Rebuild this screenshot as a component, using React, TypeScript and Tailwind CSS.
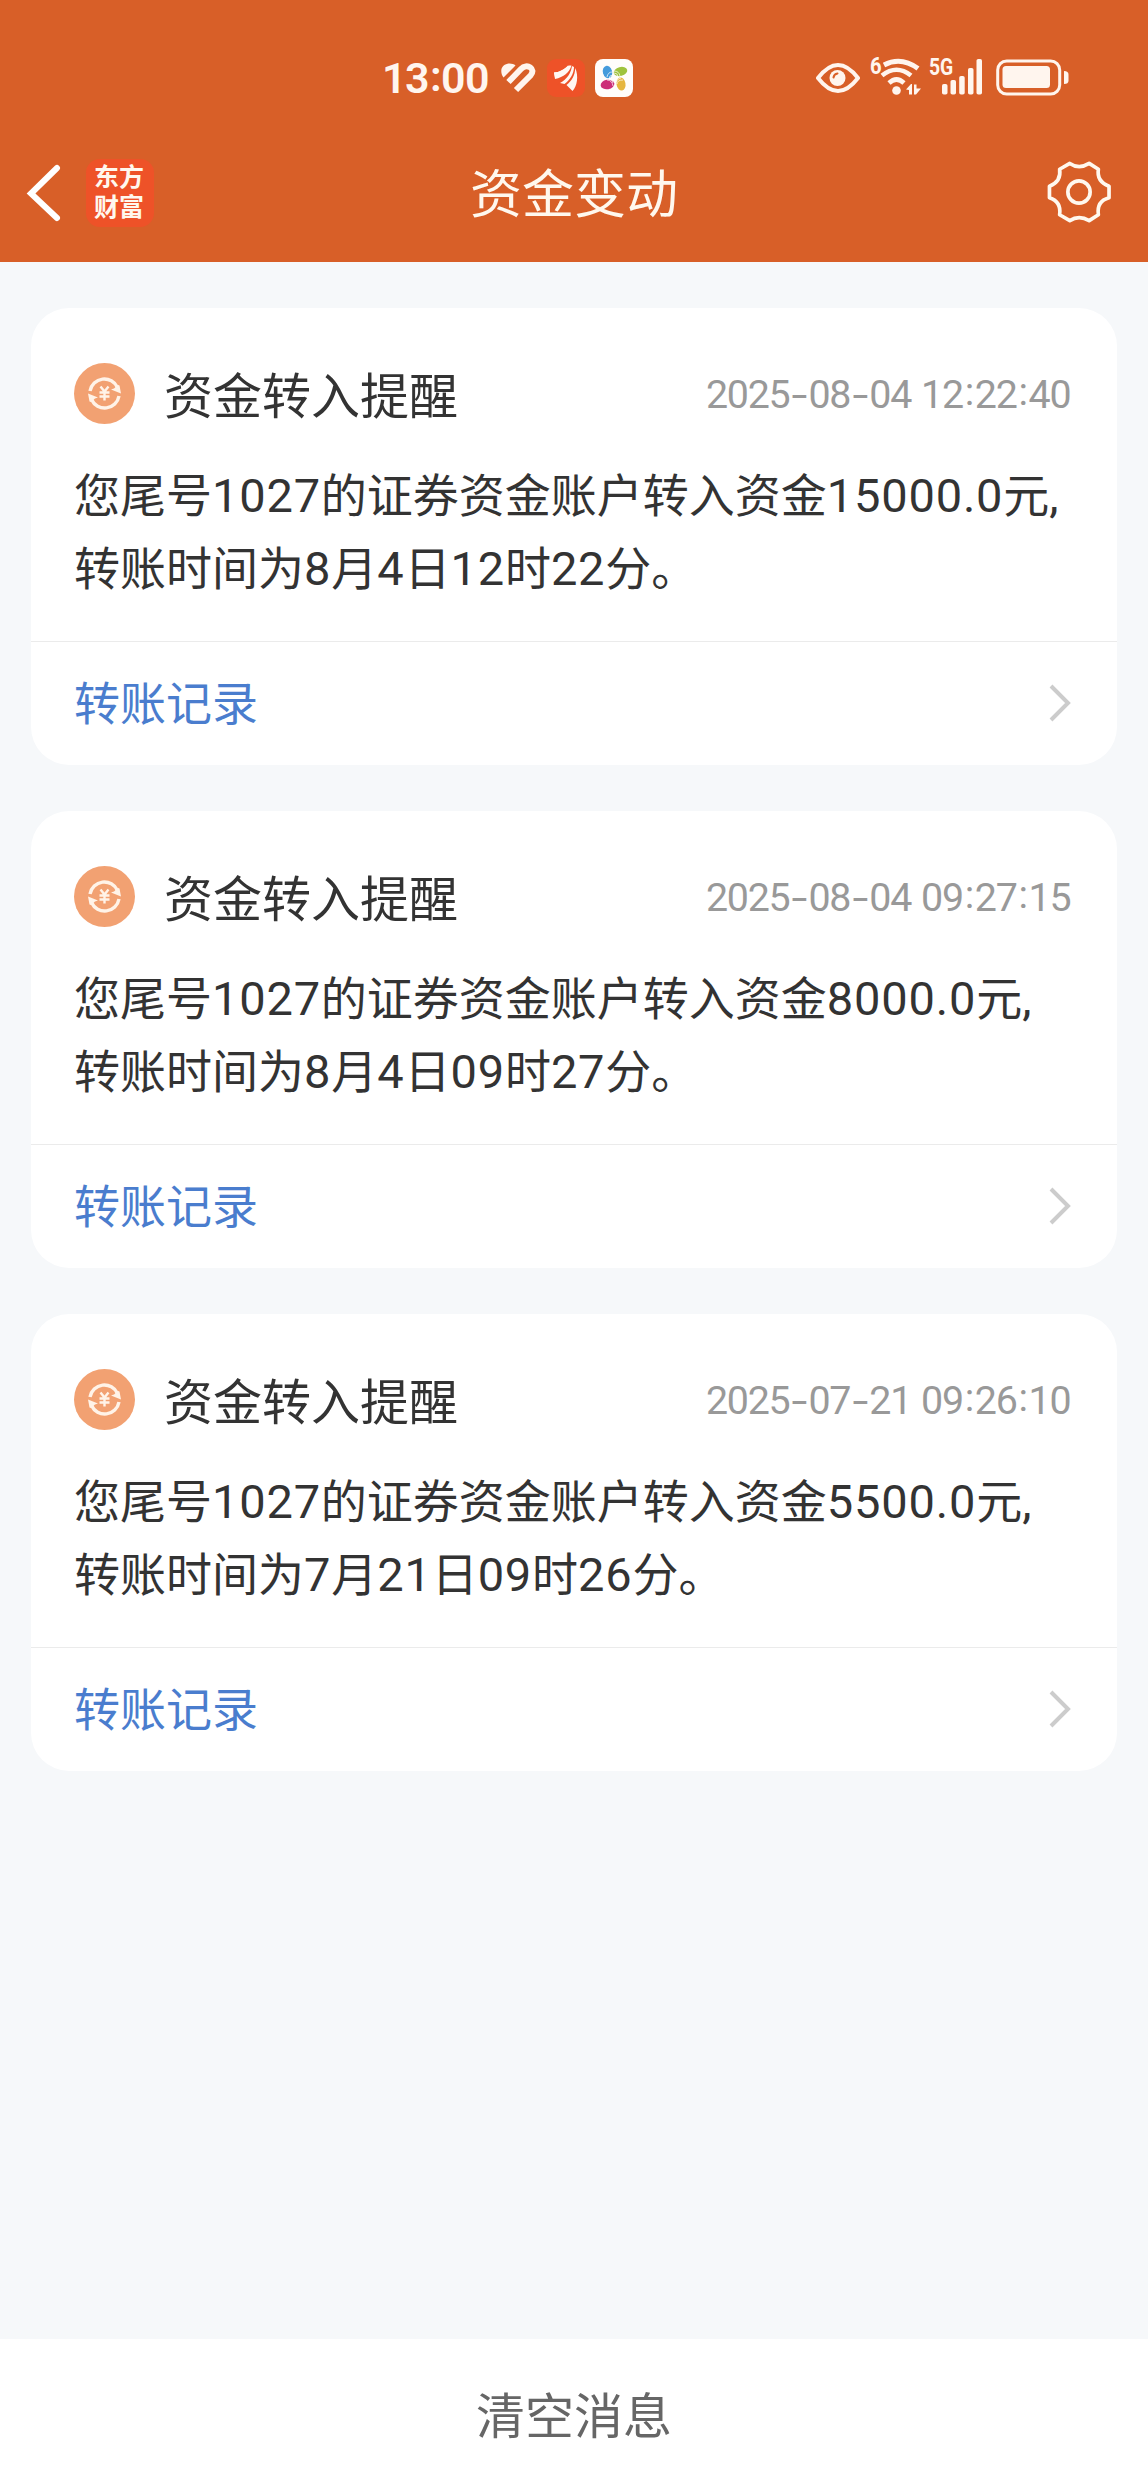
import React from 'react';

const messages = [
  {
    time: '2025-08-04 12:22:40',
    lines: ['您尾号1027的证券资金账户转入资金15000.0元,', '转账时间为8月4日12时22分。'],
  },
  {
    time: '2025-08-04 09:27:15',
    lines: ['您尾号1027的证券资金账户转入资金8000.0元,', '转账时间为8月4日09时27分。'],
  },
  {
    time: '2025-07-21 09:26:10',
    lines: ['您尾号1027的证券资金账户转入资金5500.0元,', '转账时间为7月21日09时26分。'],
  },
];

/* Latin runs get the narrower numeral face, Chinese runs keep the CJK face. */
function MixedText({ text }: { text: string }) {
  const runs = text.match(/[0-9.,]+|[^0-9.,]+/g) ?? [];
  return (
    <>
      {runs.map((run, i) =>
        /^[0-9.,]/.test(run) ? (
          <span key={i} className="font-[Roboto] text-[47px] leading-none tracking-[0.8px]">
            {run}
          </span>
        ) : (
          <span key={i}>{run}</span>
        ),
      )}
    </>
  );
}

function Timestamp({ value }: { value: string }) {
  return (
    <time className="flex items-center font-[Roboto] text-[39.4px] leading-[48px] text-[#999999]">
      {value.split('').map((c, i) => {
        if (c === '-')
          return (
            <span key={i} className="flex w-[19px] justify-center">
              <span className="scale-x-[1.45]">-</span>
            </span>
          );
        if (c === ':')
          return (
            <span key={i} className="flex w-[12px] -translate-y-[3px] justify-center">
              :
            </span>
          );
        if (c === ' ')
          return (
            <span key={i} className="w-[10px] whitespace-pre">
              {' '}
            </span>
          );
        return (
          <span key={i} className="flex w-[20.9px] justify-center">
            {c}
          </span>
        );
      })}
    </time>
  );
}

function CoinIcon() {
  return (
    <svg className="-ml-px size-[61px] shrink-0" viewBox="0 0 61 61" fill="none">
      <circle cx="30.5" cy="30.5" r="30.5" fill="#f2a172" />
      <path d="M16 28a14.500 14.500 0 0 1 27.500-3.500" stroke="#fff3e8" strokeWidth="3.400" />
      <path d="M45 33a14.500 14.500 0 0 1-27.500 3.500" stroke="#fff3e8" strokeWidth="3.400" />
      <path d="M37 26.500l3-1 4-3.500 1.500.5 1.500 8z" fill="#fff3e8" />
      <path d="M24 34.500l-3 1-4 3.500-1.500-.5-1.500-8z" fill="#fff3e8" />
      <path d="M26.500 23.500l4 5 4-5M25.500 29.500h10M25.500 33.500h10M30.500 28.500v9" stroke="#fff3e8" strokeWidth="2.400" />
    </svg>
  );
}

function MessageCard({ time, lines }: { time: string; lines: string[] }) {
  return (
    <article className="flex h-[457px] flex-col rounded-[38px] bg-white">
      <div className="flex h-[333px] flex-col px-[44px] pt-[49px]">
        <div className="flex h-[72px] items-center">
          <CoinIcon />
          <h2 className="ml-[29px] text-[49px] leading-[72px] text-[#333333]">资金转入提醒</h2>
          <div className="-mr-px ml-auto -translate-x-[3px] translate-y-[2px]">
            <Timestamp value={time} />
          </div>
        </div>
        <div className="-ml-px mt-[27px] whitespace-nowrap text-[46px] leading-[72.5px] text-[#333333]">
          {lines.map((l) => (
            <p key={l} className="h-[72.5px]">
              <MixedText text={l} />
            </p>
          ))}
        </div>
      </div>
      <a className="flex flex-1 items-center justify-between border-t border-[#ebebeb] pl-[43px] pr-[45px]">
        <span className="-mt-[7px] text-[46px] leading-[60px] text-[#4a7dce]">转账记录</span>
        <svg className="-mt-px h-[38px] w-[23px]" viewBox="0 0 23 38" fill="none">
          <path d="M2 2l17 17L2 36" stroke="#cccccc" strokeWidth="4" />
        </svg>
      </a>
    </article>
  );
}

function StatusBar() {
  return (
    <div className="flex h-[156px] items-center pl-[382px] pr-[79px] text-[#fff5ee]">
      <span className="flex w-[106px] font-[Roboto] text-[43px] font-semibold leading-[52px]">
        <span className="w-[23px]">1</span>
        <span className="w-[24px]">3</span>
        <span className="mx-[1px] w-[9px] -translate-y-[2px]">:</span>
        <span className="ml-[1px] w-[24px]">0</span>
        <span className="w-[24px]">0</span>
      </span>
      <svg className="ml-[13px] h-[30px] w-[35px]" viewBox="0 0 35 30" fill="none" stroke="currentColor">
        <path d="M2.500 14.500C-1.500 9 0 2 6.500.8 9.500.2 12.500 1 14.500 2.500z" fill="currentColor" stroke="none" />
        <path d="M7.500 19L20 6C26-.5 35.500 6 29.500 12.500L15 27" strokeWidth="6" />
      </svg>
      <svg className="ml-[11px] size-[38px]" viewBox="0 0 38 38">
        <rect width="38" height="38" rx="9" fill="#ee5228" />
        <g fill="#fff7f2">
          <path d="M7 13.500C12 13.500 18 10 21 6.500l1 .5C20 13 13 17.500 8 18.500z" />
          <path d="M23 6.500h1.500C24 14 17 22 11 25.500l-2.500-5C15 18 20.500 13 23 6.500z" fill="#ee5228" />
          <path d="M7 13.500C12 13.500 18 10 22 6.500h2.500C22 14 17 18 8 20z" />
          <path d="M25 7l2 1c0 7-4.500 13-9.500 17L13 24C20 20 24 14 25 7z" />
          <path d="M28.200 9c3.600 8 2 18-2.700 23l-6-6c5-4 8.500-9 8.700-17z" />
        </g>
      </svg>
      <svg className="ml-[10px] size-[38px]" viewBox="0 0 38 38">
        <rect width="38" height="38" rx="8" fill="#fffdfb" />
        <ellipse cx="12.500" cy="13" rx="4.600" ry="6.300" fill="#459bdc" transform="rotate(-15 12.500 13)" />
        <ellipse cx="25.500" cy="12.500" rx="6.900" ry="4.500" fill="#9fc33d" transform="rotate(-15 25.500 12.500)" />
        <ellipse cx="12.500" cy="25.500" rx="6.900" ry="4.700" fill="#cc2f79" transform="rotate(-10 12.500 25.500)" />
        <ellipse cx="26" cy="25" rx="4.500" ry="6.600" fill="#e6b63f" transform="rotate(-10 26 25)" />
        <g fill="none" stroke="#fffdfb" strokeWidth=".7">
          <path d="M12 18q1-5 5-5M14 20q0-4 4-4M19 12q5 0 6 5M19 14q4 0 4 4M12 21q5 0 6 6M14 20q4 1 4 4M22 25q0-4 6-4M21 23q2-4 5-4" />
        </g>
      </svg>
      <svg className="ml-auto h-[30px] w-[44px]" viewBox="0 0 44 30" fill="none">
        <path d="M2 15Q22-11 42 15Q22 41 2 15z" stroke="currentColor" strokeWidth="4" strokeLinejoin="round" />
        <circle cx="21.500" cy="15" r="8" fill="currentColor" />
        <path d="M17.500 14.500q.5-3.500 4-4" stroke="#d85f28" strokeWidth="2" strokeLinecap="round" />
      </svg>
      <div className="relative ml-[11px] h-[40px] w-[50px]">
        <span className="absolute -left-px -top-px origin-top-left scale-x-[0.88] font-[Roboto] text-[23px] font-bold leading-[20px]">
          6
        </span>
        <svg className="h-full w-full" viewBox="0 0 50 40" fill="none">
          <path d="M13 7Q30-2 47 10.500" stroke="currentColor" strokeWidth="5" />
          <path d="M11 17.500Q25.500 6 40 17.500" stroke="currentColor" strokeWidth="4.600" />
          <path d="M18 25Q25.500 18 33 25" stroke="currentColor" strokeWidth="4.600" />
          <circle cx="25.500" cy="32.500" r="4.300" fill="currentColor" />
          <path d="M35 31.500l5-5.500h1v10.500h-3v-4.500zM43 26.500h2.500v4H50l-5 6h-2z" fill="currentColor" />
        </svg>
      </div>
      <div className="relative ml-[8px] h-[40px] w-[54px]">
        <span className="absolute left-0 top-0 origin-left scale-x-[0.84] font-[Roboto] text-[23px] font-bold leading-[20px]">
          5G
        </span>
        <svg className="h-full w-full" viewBox="0 0 54 40" fill="currentColor">
          <rect x="13" y="26" width="5.500" height="10.500" rx="1.800" />
          <rect x="21.500" y="22" width="5.500" height="14.500" rx="1.800" />
          <rect x="30.200" y="18" width="5.500" height="18.500" rx="1.800" />
          <rect x="39" y="10" width="5.500" height="26.500" rx="1.800" />
          <rect x="47.500" y="1" width="5.500" height="35.500" rx="1.800" />
        </svg>
      </div>
      <svg className="ml-[13px] h-[38px] w-[73px]" viewBox="0 0 73 38" fill="none">
        <rect x="1.700" y="2" width="62" height="33" rx="9" stroke="currentColor" strokeWidth="3" />
        <rect x="6.500" y="7" width="47.500" height="22" rx="3.500" fill="currentColor" />
        <path d="M68 12q4.500 0 4.500 3.500v6q0 3.500-4.500 3.500z" fill="currentColor" />
      </svg>
    </div>
  );
}

function NavBar() {
  return (
    <div className="grid h-[74px] grid-cols-[1fr_auto_1fr] items-center text-[#fff8ee]">
      <div className="flex items-center pl-[26px]">
        <svg className="h-[58px] w-[36px]" viewBox="0 0 36 58" fill="none">
          <path d="M31 4L5 29.500L31 54" stroke="#fff" strokeWidth="6" strokeLinecap="round" strokeLinejoin="miter" />
        </svg>
        <div className="ml-[24px] flex size-[68px] justify-center rounded-[14px] bg-[#ee5228] pr-[2px] pt-[1px]">
          <span className="w-[50px] text-[25px] font-bold leading-[30px] [word-break:break-all]">东方财富</span>
        </div>
      </div>
      <h1 className="-mt-[4px] text-[52px] leading-[74px]">资金变动</h1>
      <div className="-mt-[3px] flex justify-end pr-[37px]">
        <svg className="h-[62px] w-[64px]" viewBox="0 0 66 64" fill="none" stroke="currentColor" strokeWidth="3.800" strokeLinejoin="round">
          <path d="M23.500 2.500Q33 9 43.500 2.500L53 8.500Q51 21 64 26V38Q51 41.500 53 55.500L43.500 61.500Q33 55.500 23.500 61.500L13 55.500Q15 42 2.500 38V26Q15 21 13 8.500Z" />
          <circle cx="33" cy="32" r="11.500" />
        </svg>
      </div>
    </div>
  );
}

export default function App() {
  return (
    <div className="flex h-[2492px] w-[1148px] flex-col bg-[#f6f8fa] font-['Noto_Sans_CJK_SC',sans-serif]">
      <header className="h-[262px] bg-[#d85f28]">
        <StatusBar />
        <NavBar />
      </header>
      <main className="flex flex-1 flex-col gap-[46px] px-[31px] pt-[46px]">
        {messages.map((m) => (
          <MessageCard key={m.time} time={m.time} lines={m.lines} />
        ))}
      </main>
      <footer className="flex h-[153px] items-center justify-center bg-white">
        <button className="-mt-[5px] text-[49px] leading-[72px] text-[#666666]">清空消息</button>
      </footer>
    </div>
  );
}
